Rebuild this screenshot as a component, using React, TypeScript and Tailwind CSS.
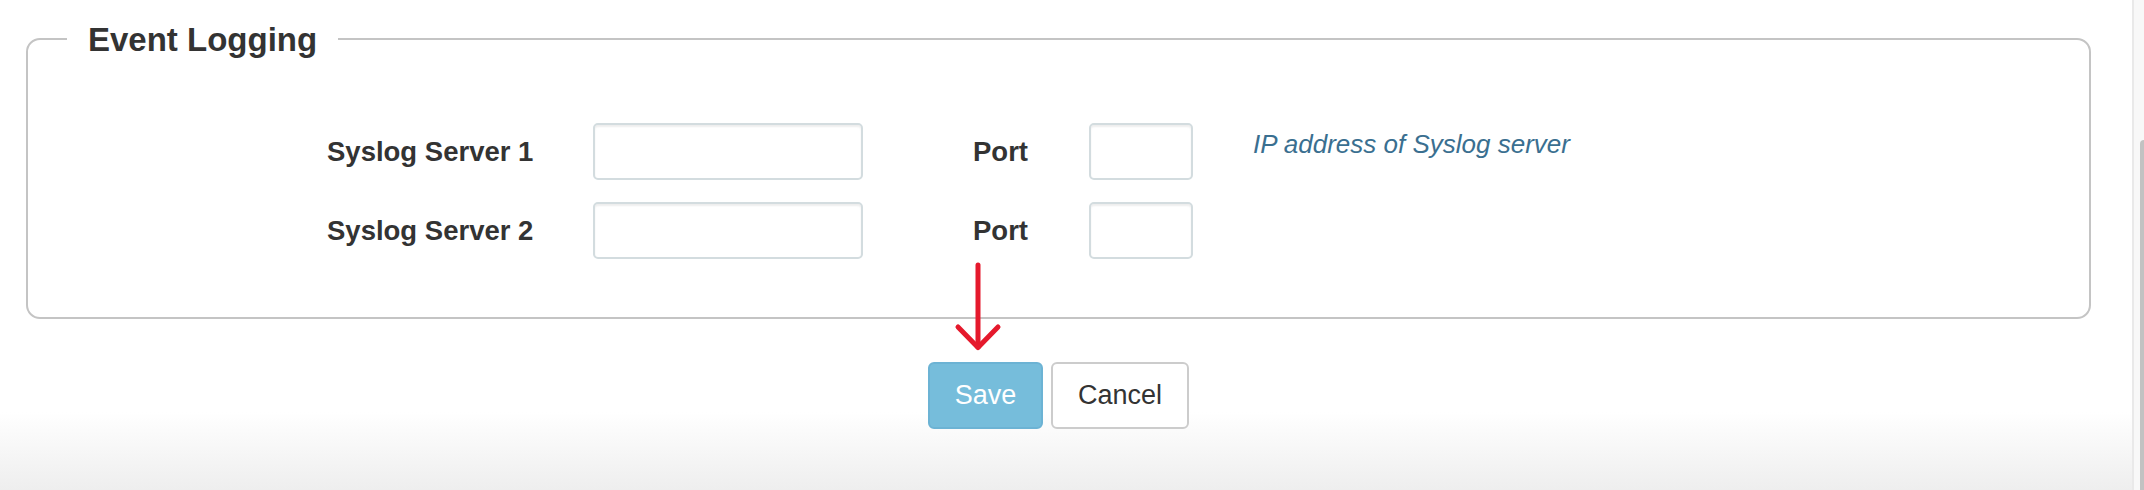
const servers = [
  { label: 'Syslog Server 1', help: 'IP address of Syslog server' },
  { label: 'Syslog Server 2', help: '' },
];

function DownArrow() {
  return (
    <svg
      className="absolute bottom-full left-[25px] mb-[10px]"
      width="50"
      height="90"
      viewBox="0 0 50 90"
      fill="none"
      stroke="#e5192c"
      strokeWidth="5"
      strokeLinecap="round"
      strokeLinejoin="round"
    >
      <path d="M25 3 L25 85" />
      <path d="M5 65 L25 85.5 L45 65" />
    </svg>
  );
}

export default function App() {
  return (
    <div className="flex h-[490px] w-[2144px] overflow-hidden bg-[linear-gradient(to_bottom,#ffffff_0px,#ffffff_412px,#eeeeee_490px)] font-['Liberation_Sans',Arial,sans-serif] text-[#333333]">
      <div className="flex-1 pl-[26px] pr-[41px] pt-[18px]">
        <fieldset className="rounded-[14px] border-2 border-[#c4c4c4] bg-white px-0 pt-[64px] pb-[58px]">
          <legend className="ml-[39px] px-[21px] pt-[3px] text-[33px] font-bold leading-[38px]">
            Event Logging
          </legend>

          <div className="flex flex-col gap-[22px] pl-[299px]">
            {servers.map((s) => (
              <div key={s.label} className="flex items-center">
                <label className="w-[266px] text-[27.5px] font-bold">{s.label}</label>
                <input
                  type="text"
                  className="h-[57px] w-[270px] rounded-[5px] border-2 border-[#d3dcdf] bg-white shadow-[inset_0_2px_2px_rgba(0,0,0,0.07)] outline-none"
                />
                <label className="ml-[110px] w-[116px] text-[27.5px] font-bold">Port</label>
                <input
                  type="text"
                  className="h-[57px] w-[104px] rounded-[5px] border-2 border-[#d3dcdf] bg-white shadow-[inset_0_2px_2px_rgba(0,0,0,0.07)] outline-none"
                />
                {s.help && (
                  <p className="ml-[60px] mt-[3px] self-start text-[26px] italic leading-[37px] text-[#3a6f90]">
                    {s.help}
                  </p>
                )}
              </div>
            ))}
          </div>
        </fieldset>

        <div className="mt-[43px] flex justify-center gap-[8px]">
          <div className="relative">
            <DownArrow />
            <button
              type="button"
              className="h-[67px] w-[115px] rounded-[6px] border-2 border-[#6cb3d4] bg-[#76bddb] text-[27px] text-white"
            >
              Save
            </button>
          </div>
          <button
            type="button"
            className="h-[67px] w-[138px] rounded-[6px] border-2 border-[#cccccc] bg-white text-[27px] text-[#333333]"
          >
            Cancel
          </button>
        </div>
      </div>

      {/* scrollbar */}
      <div className="flex w-[12px] flex-col border-l-2 border-[#e9e9e9] bg-[#f8f8f8] pt-[140px] pl-[6px]">
        <div className="flex-1 rounded-tl-[4px] bg-[#c2c2c2]" />
      </div>
    </div>
  );
}
